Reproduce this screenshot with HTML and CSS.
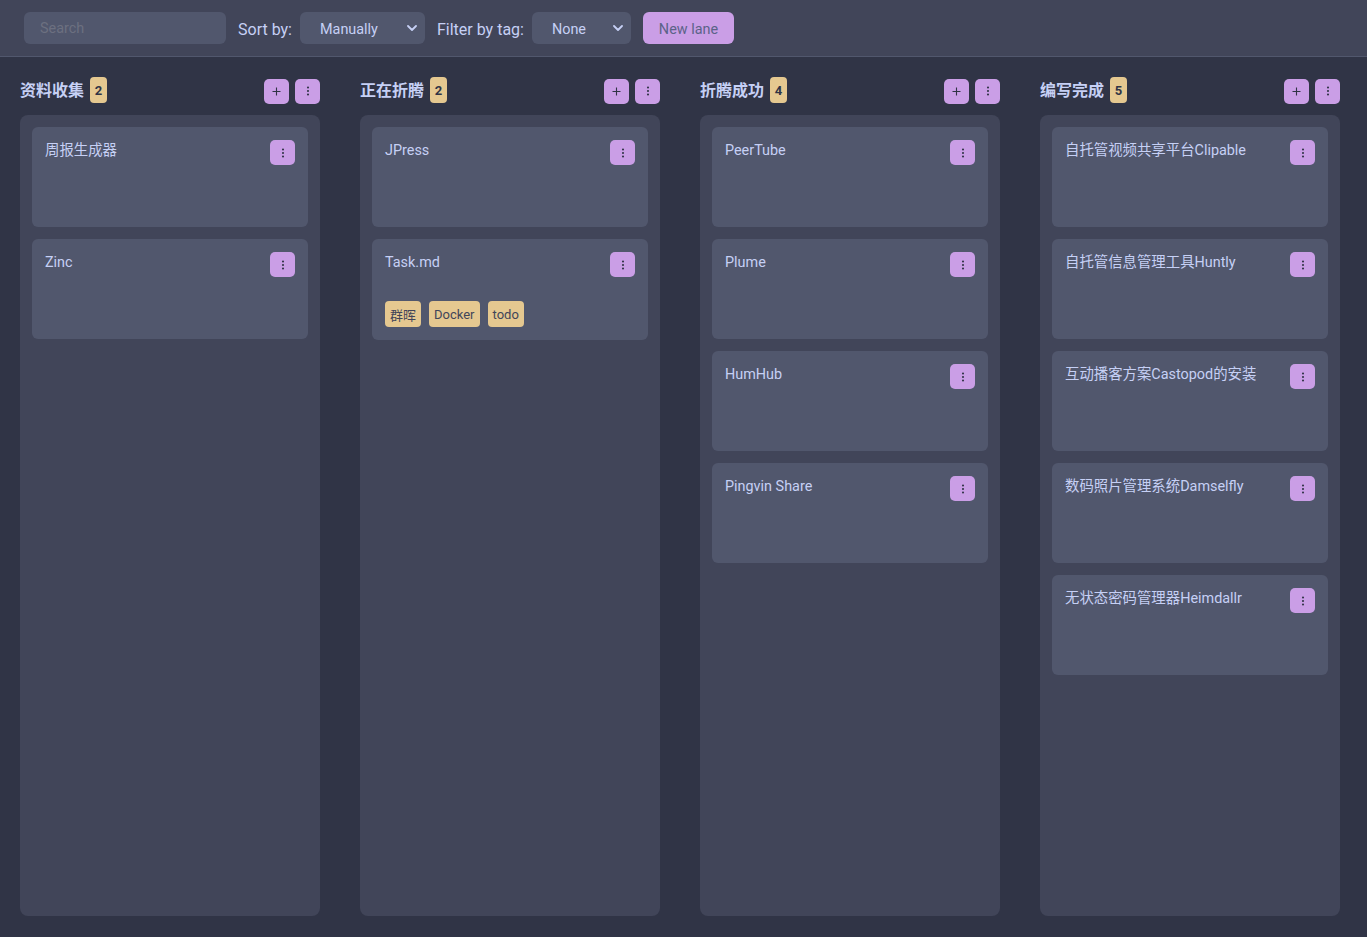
FILE: index.html
```html
<!DOCTYPE html>
<html lang="zh">
<head>
<meta charset="utf-8">
<title>Kanban</title>
<link rel="stylesheet" href="styles.css">
</head>
<body>
<header class="topbar">
  <div class="search">Search</div>
  <div class="field">
    <span class="label">Sort by:</span>
    <div class="select select-sort"><span>Manually</span><svg class="chev" width="10" height="6" viewBox="0 0 10 6"><path d="M1 1l4 4 4-4" fill="none" stroke="#c6d0f5" stroke-width="1.8" stroke-linecap="round" stroke-linejoin="round"/></svg></div>
  </div>
  <div class="field">
    <span class="label">Filter by tag:</span>
    <div class="select select-tag"><span>None</span><svg class="chev" width="10" height="6" viewBox="0 0 10 6"><path d="M1 1l4 4 4-4" fill="none" stroke="#c6d0f5" stroke-width="1.8" stroke-linecap="round" stroke-linejoin="round"/></svg></div>
  </div>
  <div class="btn-new">New lane</div>
</header>
<main class="board">
  <section class="lane">
    <div class="lane-head">
      <h2 class="lane-title">资料收集</h2><span class="count">2</span>
      <div class="lane-actions">
        <div class="sq"><svg width="9" height="9" viewBox="0 0 9 9"><path d="M4.5 0.5v8M0.5 4.5h8" stroke="#303446" stroke-width="1.1"/></svg></div>
        <div class="sq"><svg width="4" height="12" viewBox="0 0 4 12"><circle cx="2" cy="2.5" r="1.05" fill="#303446"/><circle cx="2" cy="6" r="1.05" fill="#303446"/><circle cx="2" cy="9.5" r="1.05" fill="#303446"/></svg></div>
      </div>
    </div>
    <div class="lane-body">
      <div class="card"><div class="card-row"><span class="card-title">周报生成器</span><div class="sq"><svg width="4" height="12" viewBox="0 0 4 12"><circle cx="2" cy="2.5" r="1.05" fill="#303446"/><circle cx="2" cy="6" r="1.05" fill="#303446"/><circle cx="2" cy="9.5" r="1.05" fill="#303446"/></svg></div></div></div>
      <div class="card"><div class="card-row"><span class="card-title">Zinc</span><div class="sq"><svg width="4" height="12" viewBox="0 0 4 12"><circle cx="2" cy="2.5" r="1.05" fill="#303446"/><circle cx="2" cy="6" r="1.05" fill="#303446"/><circle cx="2" cy="9.5" r="1.05" fill="#303446"/></svg></div></div></div>
    </div>
  </section>
  <section class="lane">
    <div class="lane-head">
      <h2 class="lane-title">正在折腾</h2><span class="count">2</span>
      <div class="lane-actions">
        <div class="sq"><svg width="9" height="9" viewBox="0 0 9 9"><path d="M4.5 0.5v8M0.5 4.5h8" stroke="#303446" stroke-width="1.1"/></svg></div>
        <div class="sq"><svg width="4" height="12" viewBox="0 0 4 12"><circle cx="2" cy="2.5" r="1.05" fill="#303446"/><circle cx="2" cy="6" r="1.05" fill="#303446"/><circle cx="2" cy="9.5" r="1.05" fill="#303446"/></svg></div>
      </div>
    </div>
    <div class="lane-body">
      <div class="card"><div class="card-row"><span class="card-title">JPress</span><div class="sq"><svg width="4" height="12" viewBox="0 0 4 12"><circle cx="2" cy="2.5" r="1.05" fill="#303446"/><circle cx="2" cy="6" r="1.05" fill="#303446"/><circle cx="2" cy="9.5" r="1.05" fill="#303446"/></svg></div></div></div>
      <div class="card"><div class="card-row"><span class="card-title">Task.md</span><div class="sq"><svg width="4" height="12" viewBox="0 0 4 12"><circle cx="2" cy="2.5" r="1.05" fill="#303446"/><circle cx="2" cy="6" r="1.05" fill="#303446"/><circle cx="2" cy="9.5" r="1.05" fill="#303446"/></svg></div></div>
        <div class="tags"><span class="tag">群晖</span><span class="tag">Docker</span><span class="tag">todo</span></div>
      </div>
    </div>
  </section>
  <section class="lane">
    <div class="lane-head">
      <h2 class="lane-title">折腾成功</h2><span class="count">4</span>
      <div class="lane-actions">
        <div class="sq"><svg width="9" height="9" viewBox="0 0 9 9"><path d="M4.5 0.5v8M0.5 4.5h8" stroke="#303446" stroke-width="1.1"/></svg></div>
        <div class="sq"><svg width="4" height="12" viewBox="0 0 4 12"><circle cx="2" cy="2.5" r="1.05" fill="#303446"/><circle cx="2" cy="6" r="1.05" fill="#303446"/><circle cx="2" cy="9.5" r="1.05" fill="#303446"/></svg></div>
      </div>
    </div>
    <div class="lane-body">
      <div class="card"><div class="card-row"><span class="card-title">PeerTube</span><div class="sq"><svg width="4" height="12" viewBox="0 0 4 12"><circle cx="2" cy="2.5" r="1.05" fill="#303446"/><circle cx="2" cy="6" r="1.05" fill="#303446"/><circle cx="2" cy="9.5" r="1.05" fill="#303446"/></svg></div></div></div>
      <div class="card"><div class="card-row"><span class="card-title">Plume</span><div class="sq"><svg width="4" height="12" viewBox="0 0 4 12"><circle cx="2" cy="2.5" r="1.05" fill="#303446"/><circle cx="2" cy="6" r="1.05" fill="#303446"/><circle cx="2" cy="9.5" r="1.05" fill="#303446"/></svg></div></div></div>
      <div class="card"><div class="card-row"><span class="card-title">HumHub</span><div class="sq"><svg width="4" height="12" viewBox="0 0 4 12"><circle cx="2" cy="2.5" r="1.05" fill="#303446"/><circle cx="2" cy="6" r="1.05" fill="#303446"/><circle cx="2" cy="9.5" r="1.05" fill="#303446"/></svg></div></div></div>
      <div class="card"><div class="card-row"><span class="card-title">Pingvin Share</span><div class="sq"><svg width="4" height="12" viewBox="0 0 4 12"><circle cx="2" cy="2.5" r="1.05" fill="#303446"/><circle cx="2" cy="6" r="1.05" fill="#303446"/><circle cx="2" cy="9.5" r="1.05" fill="#303446"/></svg></div></div></div>
    </div>
  </section>
  <section class="lane">
    <div class="lane-head">
      <h2 class="lane-title">编写完成</h2><span class="count">5</span>
      <div class="lane-actions">
        <div class="sq"><svg width="9" height="9" viewBox="0 0 9 9"><path d="M4.5 0.5v8M0.5 4.5h8" stroke="#303446" stroke-width="1.1"/></svg></div>
        <div class="sq"><svg width="4" height="12" viewBox="0 0 4 12"><circle cx="2" cy="2.5" r="1.05" fill="#303446"/><circle cx="2" cy="6" r="1.05" fill="#303446"/><circle cx="2" cy="9.5" r="1.05" fill="#303446"/></svg></div>
      </div>
    </div>
    <div class="lane-body">
      <div class="card"><div class="card-row"><span class="card-title">自托管视频共享平台Clipable</span><div class="sq"><svg width="4" height="12" viewBox="0 0 4 12"><circle cx="2" cy="2.5" r="1.05" fill="#303446"/><circle cx="2" cy="6" r="1.05" fill="#303446"/><circle cx="2" cy="9.5" r="1.05" fill="#303446"/></svg></div></div></div>
      <div class="card"><div class="card-row"><span class="card-title">自托管信息管理工具Huntly</span><div class="sq"><svg width="4" height="12" viewBox="0 0 4 12"><circle cx="2" cy="2.5" r="1.05" fill="#303446"/><circle cx="2" cy="6" r="1.05" fill="#303446"/><circle cx="2" cy="9.5" r="1.05" fill="#303446"/></svg></div></div></div>
      <div class="card"><div class="card-row"><span class="card-title">互动播客方案Castopod的安装</span><div class="sq"><svg width="4" height="12" viewBox="0 0 4 12"><circle cx="2" cy="2.5" r="1.05" fill="#303446"/><circle cx="2" cy="6" r="1.05" fill="#303446"/><circle cx="2" cy="9.5" r="1.05" fill="#303446"/></svg></div></div></div>
      <div class="card"><div class="card-row"><span class="card-title">数码照片管理系统Damselfly</span><div class="sq"><svg width="4" height="12" viewBox="0 0 4 12"><circle cx="2" cy="2.5" r="1.05" fill="#303446"/><circle cx="2" cy="6" r="1.05" fill="#303446"/><circle cx="2" cy="9.5" r="1.05" fill="#303446"/></svg></div></div></div>
      <div class="card"><div class="card-row"><span class="card-title">无状态密码管理器Heimdallr</span><div class="sq"><svg width="4" height="12" viewBox="0 0 4 12"><circle cx="2" cy="2.5" r="1.05" fill="#303446"/><circle cx="2" cy="6" r="1.05" fill="#303446"/><circle cx="2" cy="9.5" r="1.05" fill="#303446"/></svg></div></div></div>
    </div>
  </section>
</main>
</body>
</html>
```

FILE: styles.css
```css
* { box-sizing: border-box; }
html, body { margin: 0; padding: 0; }
body {
  background: #303446;
  color: #c6d0f5;
  font-family: Roboto, "Noto Sans CJK SC", sans-serif;
  height: 100vh;
  display: flex;
  flex-direction: column;
  overflow: hidden;
}
.topbar {
  height: 57px;
  flex: none;
  background: #414559;
  border-bottom: 1px solid #51576d;
  display: flex;
  align-items: center;
  padding: 0 24px 1px;
  gap: 12px;
}
.field {
  display: flex;
  align-items: center;
  gap: 8px;
}
.search {
  width: 202px;
  height: 32px;
  border-radius: 6px;
  background: #51576d;
  color: #6c7080;
  font-size: 14.4px;
  line-height: 32px;
  padding: 1px 0 0 16px;
}
.label {
  font-size: 16px;
  color: #c6d0f5;
  padding-top: 3px;
}
.select {
  height: 32px;
  border-radius: 6px;
  background: #51576d;
  display: flex;
  align-items: center;
  justify-content: space-between;
  font-size: 14.4px;
  padding: 0 8px 0 20px;
  color: #c6d0f5;
}
.select span { padding-top: 3px; }
.select-sort { width: 125px; }
.select-tag { width: 99px; }
.chev { margin-top: 1px; }
.btn-new {
  height: 32px;
  width: 91px;
  border-radius: 6px;
  background: #ca9ee6;
  color: #5b6388;
  font-size: 14.4px;
  display: flex;
  align-items: center;
  justify-content: center;
  padding-top: 3px;
}
.board {
  flex: 1;
  min-height: 0;
  display: flex;
  gap: 40px;
  padding: 20px 20px 21px;
}
.lane {
  width: 300px;
  display: flex;
  flex-direction: column;
}
.lane-head {
  height: 26px;
  display: flex;
  align-items: center;
  gap: 6px;
  margin-bottom: 12px;
}
.lane-title {
  margin: 0;
  font-size: 16px;
  font-weight: 700;
  color: #c6d0f5;
  line-height: 26px;
  padding-top: 2px;
}
.count {
  height: 26px;
  min-width: 17px;
  padding: 1px 4px 0;
  border-radius: 4px;
  background: #e5c890;
  color: #303446;
  font-size: 13px;
  font-weight: 700;
  display: flex;
  align-items: center;
  justify-content: center;
}
.lane-actions {
  margin-left: auto;
  display: flex;
  gap: 6px;
  margin-top: 2px;
}
.sq {
  width: 25px;
  height: 25px;
  flex: none;
  border-radius: 5px;
  background: #ca9ee6;
  display: flex;
  align-items: center;
  justify-content: center;
}
.lane-body {
  flex: 1;
  background: #414559;
  border-radius: 8px;
  padding: 12px;
  display: flex;
  flex-direction: column;
  gap: 12px;
}
.card {
  min-height: 100px;
  background: #51576d;
  border-radius: 6px;
  padding: 12px 13px 13px;
  display: flex;
  flex-direction: column;
}
.card-row {
  display: flex;
  justify-content: space-between;
  align-items: flex-start;
}
.card-title {
  font-size: 14.4px;
  line-height: 20px;
  padding-top: 2px;
  color: #c6d0f5;
}
.card-row .sq { margin-top: 1px; }
.tags {
  display: flex;
  gap: 8px;
  margin-top: 24px;
}
.tag {
  height: 26px;
  padding: 1px 5px 0;
  border-radius: 4px;
  background: #e5c890;
  color: #414559;
  font-size: 13px;
  display: flex;
  align-items: center;
}
```
